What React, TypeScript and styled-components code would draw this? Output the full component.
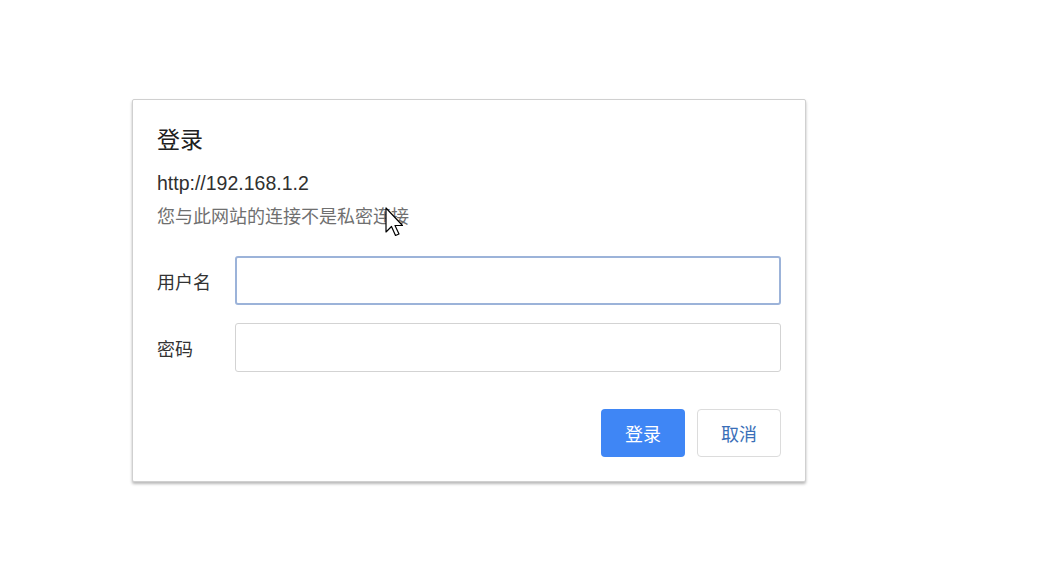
import React from "react";
import styled, { createGlobalStyle } from "styled-components";

const Global = createGlobalStyle`
  html, body { margin: 0; padding: 0; background: #ffffff; }
  body { font-family: "Noto Sans CJK SC", "Noto Sans", "Liberation Sans", sans-serif; }
  * { box-sizing: border-box; }
`;

const Page = styled.div`
  position: relative;
  width: 1061px;
  height: 587px;
  padding: 99px 0 0 132px;
`;

const Dialog = styled.div`
  width: 674px;
  height: 383px;
  background: #fff;
  border: 1px solid #d0d0d0;
  border-radius: 2px;
  box-shadow: 0 2px 3px rgba(0, 0, 0, 0.28);
  padding: 23px 24px 24px 24px;
  display: flex;
  flex-direction: column;
`;

const Title = styled.div`
  font-size: 23px;
  line-height: 30px;
  color: #202020;
`;

const Url = styled.div`
  margin-top: 18px;
  font-family: "Liberation Sans", "Noto Sans CJK SC", sans-serif;
  font-size: 19.5px;
  line-height: 24px;
  color: #303030;
`;

const Note = styled.div`
  margin-top: 8px;
  font-size: 18px;
  line-height: 24px;
  color: #6f6f6f;
`;

const Form = styled.div`
  margin-top: 29px;
  display: flex;
  flex-direction: column;
  gap: 18px;
`;

const Row = styled.label`
  display: grid;
  grid-template-columns: 78px 1fr;
  align-items: center;
`;

const Label = styled.span`
  font-size: 18px;
  color: #333;
`;

const Input = styled.input<{ $focused?: boolean }>`
  height: 49px;
  width: 100%;
  border-radius: 3px;
  outline: none;
  background: #fff;
  font-size: 15px;
  padding: 0 10px;
  border: ${(p) => (p.$focused ? "2px solid #9cb3d9" : "1px solid #d3d3d3")};
`;

const Actions = styled.div`
  margin-top: auto;
  display: flex;
  justify-content: flex-end;
  gap: 12px;
`;

const Button = styled.button<{ $primary?: boolean }>`
  width: 84px;
  height: 48px;
  border-radius: 4px;
  font-family: "Noto Sans CJK SC", sans-serif;
  font-size: 18px;
  cursor: pointer;
  background: ${(p) => (p.$primary ? "#3f86f5" : "#ffffff")};
  color: ${(p) => (p.$primary ? "#ffffff" : "#3a6fb8")};
  border: ${(p) => (p.$primary ? "none" : "1px solid #dcdcdc")};
`;

const Cursor = styled.svg`
  position: absolute;
  left: 385px;
  top: 207px;
  pointer-events: none;
`;

export default function App() {
  return (
    <>
      <Global />
      <Page>
        <Dialog>
          <Title>登录</Title>
          <Url>http://192.168.1.2</Url>
          <Note>您与此网站的连接不是私密连接</Note>
          <Form>
            <Row>
              <Label>用户名</Label>
              <Input $focused type="text" />
            </Row>
            <Row>
              <Label>密码</Label>
              <Input type="password" />
            </Row>
          </Form>
          <Actions>
            <Button $primary>登录</Button>
            <Button>取消</Button>
          </Actions>
        </Dialog>
        <Cursor width="20" height="30" viewBox="0 0 20 30">
          <polygon
            points="1,1 1,25 6.5,19.5 10.5,28.5 14,27 10,18.5 17.5,18.5"
            fill="#ffffff"
            stroke="#000000"
            strokeWidth="1.2"
            strokeLinejoin="round"
          />
        </Cursor>
      </Page>
    </>
  );
}
